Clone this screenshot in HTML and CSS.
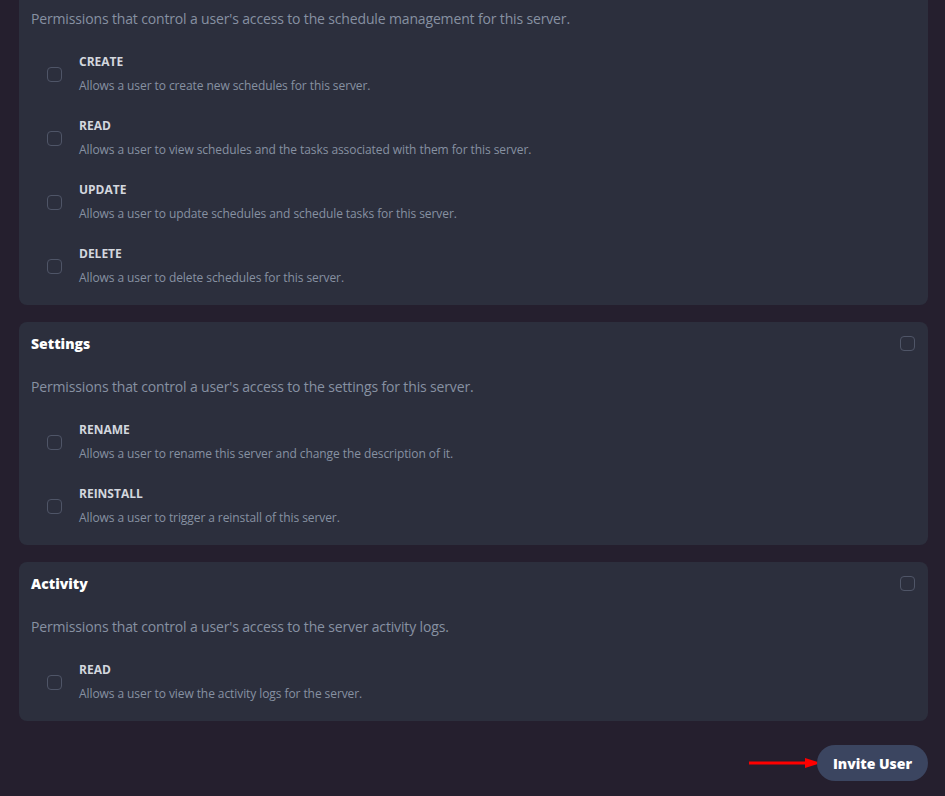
FILE: index.html
```html
<!DOCTYPE html>
<html lang="en">
<head>
  <meta charset="UTF-8" />
  <meta name="viewport" content="width=device-width, initial-scale=1.0"/>
  <title>Invite User</title>
  <link rel="stylesheet" href="styles.css">
</head>
<body>

  <div class="permissions">

    <!-- Schedules card, scrolled past its heading -->
    <div class="card first">
      <p class="card-desc">Permissions that control a user's access to the schedule management for this server.</p>
      <div class="item">
        <span class="box"></span>
        <div>
          <div class="item-name">CREATE</div>
          <div class="item-desc">Allows a user to create new schedules for this server.</div>
        </div>
      </div>
      <div class="item">
        <span class="box"></span>
        <div>
          <div class="item-name">READ</div>
          <div class="item-desc">Allows a user to view schedules and the tasks associated with them for this server.</div>
        </div>
      </div>
      <div class="item">
        <span class="box"></span>
        <div>
          <div class="item-name">UPDATE</div>
          <div class="item-desc">Allows a user to update schedules and schedule tasks for this server.</div>
        </div>
      </div>
      <div class="item">
        <span class="box"></span>
        <div>
          <div class="item-name">DELETE</div>
          <div class="item-desc">Allows a user to delete schedules for this server.</div>
        </div>
      </div>
    </div>

    <div class="card">
      <div class="card-head">
        <span class="card-title">Settings</span>
        <span class="box"></span>
      </div>
      <p class="card-desc">Permissions that control a user's access to the settings for this server.</p>
      <div class="item">
        <span class="box"></span>
        <div>
          <div class="item-name">RENAME</div>
          <div class="item-desc">Allows a user to rename this server and change the description of it.</div>
        </div>
      </div>
      <div class="item">
        <span class="box"></span>
        <div>
          <div class="item-name">REINSTALL</div>
          <div class="item-desc">Allows a user to trigger a reinstall of this server.</div>
        </div>
      </div>
    </div>

    <div class="card">
      <div class="card-head">
        <span class="card-title">Activity</span>
        <span class="box"></span>
      </div>
      <p class="card-desc">Permissions that control a user's access to the server activity logs.</p>
      <div class="item">
        <span class="box"></span>
        <div>
          <div class="item-name">READ</div>
          <div class="item-desc">Allows a user to view the activity logs for the server.</div>
        </div>
      </div>
    </div>

  </div>

  <div class="footer">
    <svg class="arrow" width="72" height="12" viewBox="0 0 72 12">
      <line x1="0" y1="6" x2="58" y2="6" stroke="#f00" stroke-width="3"/>
      <polygon points="56,1 72,6 56,11" fill="#f00"/>
    </svg>
    <button class="invite">Invite User</button>
  </div>

</body>
</html>
```

FILE: styles.css
```css
body {
  font-family: "Open Sans", "Liberation Sans", sans-serif;
  background-color: #251f2e;
  margin: 0;
  padding: 0 17px 15px 19px;
  color: #d1d5db;
}
.permissions {
  display: flex;
  flex-direction: column;
  gap: 17px;
}
.card {
  background-color: #2c2f3d;
  border-radius: 8px;
  padding: 11px 13px 7px 12px;
}
.card.first {
  margin-top: -10px;
  padding-top: 0;
  border-radius: 0 0 8px 8px;
}
.card.first .card-desc {
  margin-top: 19px;
}
.card-head {
  display: flex;
  justify-content: space-between;
  align-items: center;
  height: 20px;
}
.card-title {
  font-size: 14px;
  font-weight: 800;
  color: #fff;
}
.card-desc {
  margin: 24px 0 13px;
  font-size: 14px;
  line-height: 20px;
  letter-spacing: -0.15px;
  color: #8791a2;
}
.box {
  display: inline-block;
  width: 13px;
  height: 13px;
  border: 1px solid #4f5567;
  border-radius: 4px;
  flex-shrink: 0;
}
.item {
  display: flex;
  align-items: center;
  gap: 17px;
  padding: 11px 16px;
}
.item-name {
  font-size: 12px;
  font-weight: 700;
  line-height: 18px;
  color: #d3d7de;
  margin-bottom: 6px;
}
.item-desc {
  font-size: 12px;
  line-height: 18px;
  letter-spacing: -0.08px;
  color: #8791a2;
}
.footer {
  display: flex;
  justify-content: flex-end;
  align-items: center;
  margin-top: 24px;
}
.arrow {
  margin-right: -4px;
}
.invite {
  font-family: inherit;
  font-size: 14px;
  font-weight: 800;
  color: #fff;
  background-color: #3b4560;
  border: none;
  border-radius: 18px;
  height: 36px;
  width: 111px;
}
```
